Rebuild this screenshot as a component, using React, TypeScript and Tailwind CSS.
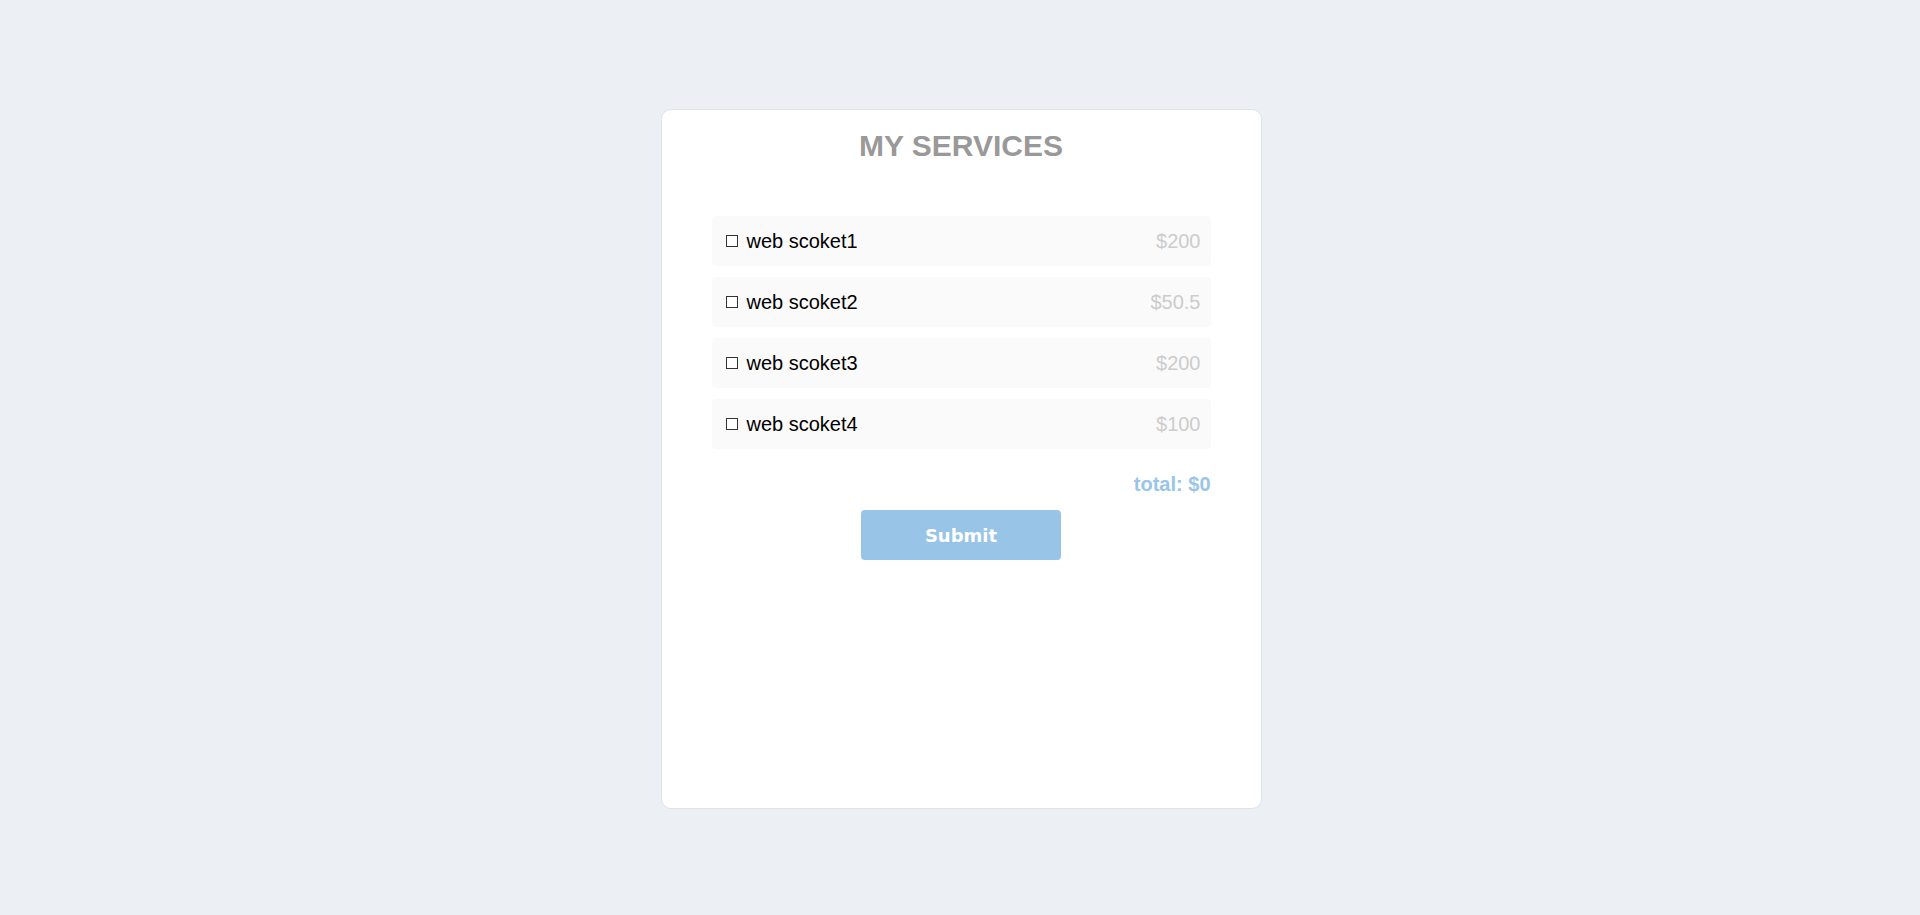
import { useState } from "react";

const services = [
  { name: "web scoket1", price: 200 },
  { name: "web scoket2", price: 50.5 },
  { name: "web scoket3", price: 200 },
  { name: "web scoket4", price: 100 },
];

export default function App() {
  const [checked, setChecked] = useState<boolean[]>(services.map(() => false));

  const total = services.reduce((sum, s, i) => (checked[i] ? sum + s.price : sum), 0);

  const toggle = (i: number) => {
    setChecked((prev) => prev.map((c, idx) => (idx === i ? !c : c)));
  };

  return (
    <div className="min-h-screen w-full bg-[#ecf0f5] pt-[109px] pl-[2px] font-['Liberation_Sans',Arial,sans-serif]">
      <div className="mx-auto flex h-[700px] w-[601px] flex-col items-center rounded-[10px] border border-[#dfe3e8] bg-white px-[50px]">
        {/* Title */}
        <h2 className="mt-[18px] text-[30px] leading-[36px] font-bold text-[#999999]">MY SERVICES</h2>

        {/* Service list */}
        <ul className="mt-[52px] flex w-full flex-col gap-[11px]">
          {services.map((s, i) => (
            <li
              key={s.name}
              onClick={() => toggle(i)}
              className="flex h-[50px] cursor-pointer items-center justify-between rounded-[4px] bg-[#fafafa] pl-[14px] pr-[10px] text-[20px]"
            >
              <span className="flex items-center gap-[9px] text-black">
                <span
                  className={`inline-block h-[12px] w-[12px] border border-[#333333] ${
                    checked[i] ? "bg-[#333333]" : "bg-white"
                  }`}
                />
                {s.name}
              </span>
              <span className="text-[#cccccc]">${s.price}</span>
            </li>
          ))}
        </ul>

        {/* Total */}
        <div className="mt-[23px] w-full text-right text-[20px] leading-[24px] font-bold text-[#99c5e8]">
          total: ${total}
        </div>

        {/* Submit */}
        <button className="mt-[14px] h-[50px] w-[200px] rounded-[4px] bg-[#98c4e8] font-['DejaVu_Sans',Verdana,sans-serif] text-[18px] font-bold text-white">
          Submit
        </button>
      </div>
    </div>
  );
}
